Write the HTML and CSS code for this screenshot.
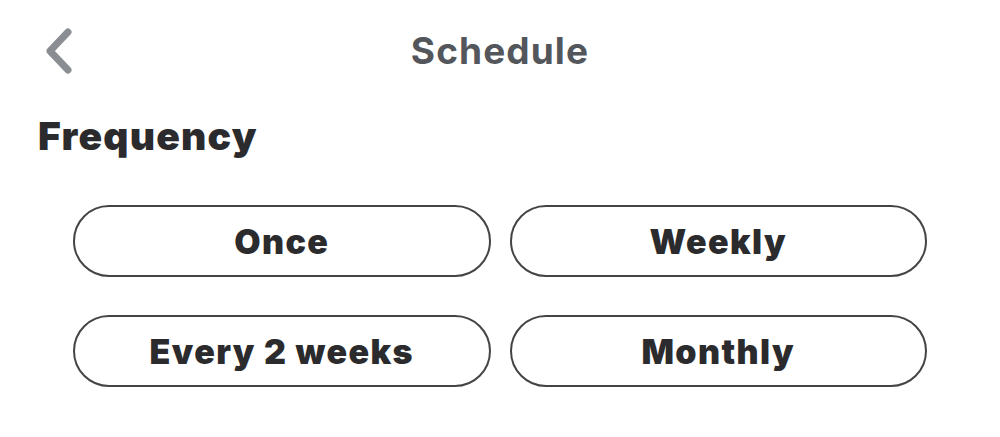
FILE: index.html
```html
<!DOCTYPE html>
<html>
<head>
<meta charset="utf-8">
<link rel="stylesheet" href="styles.css">
</head>
<body>
<div class="page">
  <header class="topbar">
    <button class="back" aria-label="Back">
      <svg width="30" height="46" viewBox="0 0 30 46"><path d="M24 4 L6 23 L24 42" fill="none" stroke="#8a8d92" stroke-width="7" stroke-linecap="round" stroke-linejoin="round"/></svg>
    </button>
    <h1 class="title">Schedule</h1>
  </header>
  <h2 class="section">Frequency</h2>
  <div class="options">
    <button class="opt">Once</button>
    <button class="opt">Weekly</button>
    <button class="opt">Every 2 weeks</button>
    <button class="opt">Monthly</button>
  </div>
</div>
</body>
</html>
```

FILE: styles.css
```css
html, body {
  margin: 0;
  padding: 0;
  background: #ffffff;
}
.page {
  width: 1000px;
  height: 437px;
  font-family: Inter, "Liberation Sans", sans-serif;
}
.topbar {
  position: relative;
  height: 102px;
  display: flex;
  align-items: center;
  justify-content: center;
}
.back {
  position: absolute;
  left: 44px;
  top: 28px;
  padding: 0;
  border: 0;
  background: none;
  display: flex;
}
.title {
  margin: 0;
  margin-top: -2px;
  font-size: 37px;
  font-weight: 700;
  color: #53565b;
  letter-spacing: 1.1px;
}
.section {
  margin: 12px 0 0 38px;
  font-size: 39px;
  font-weight: 900;
  color: #2b2b2e;
  line-height: 44px;
  letter-spacing: 1.2px;
}
.options {
  display: grid;
  grid-template-columns: 1fr 1fr;
  column-gap: 19px;
  row-gap: 38px;
  padding: 47px 73px 0 73px;
}
.opt {
  height: 72px;
  border: 2px solid #444446;
  border-radius: 36px;
  background: #fff;
  font-family: Inter, "Liberation Sans", sans-serif;
  font-size: 34px;
  font-weight: 900;
  color: #2b2b2e;
  letter-spacing: 1.4px;
  padding: 0;
}
```
